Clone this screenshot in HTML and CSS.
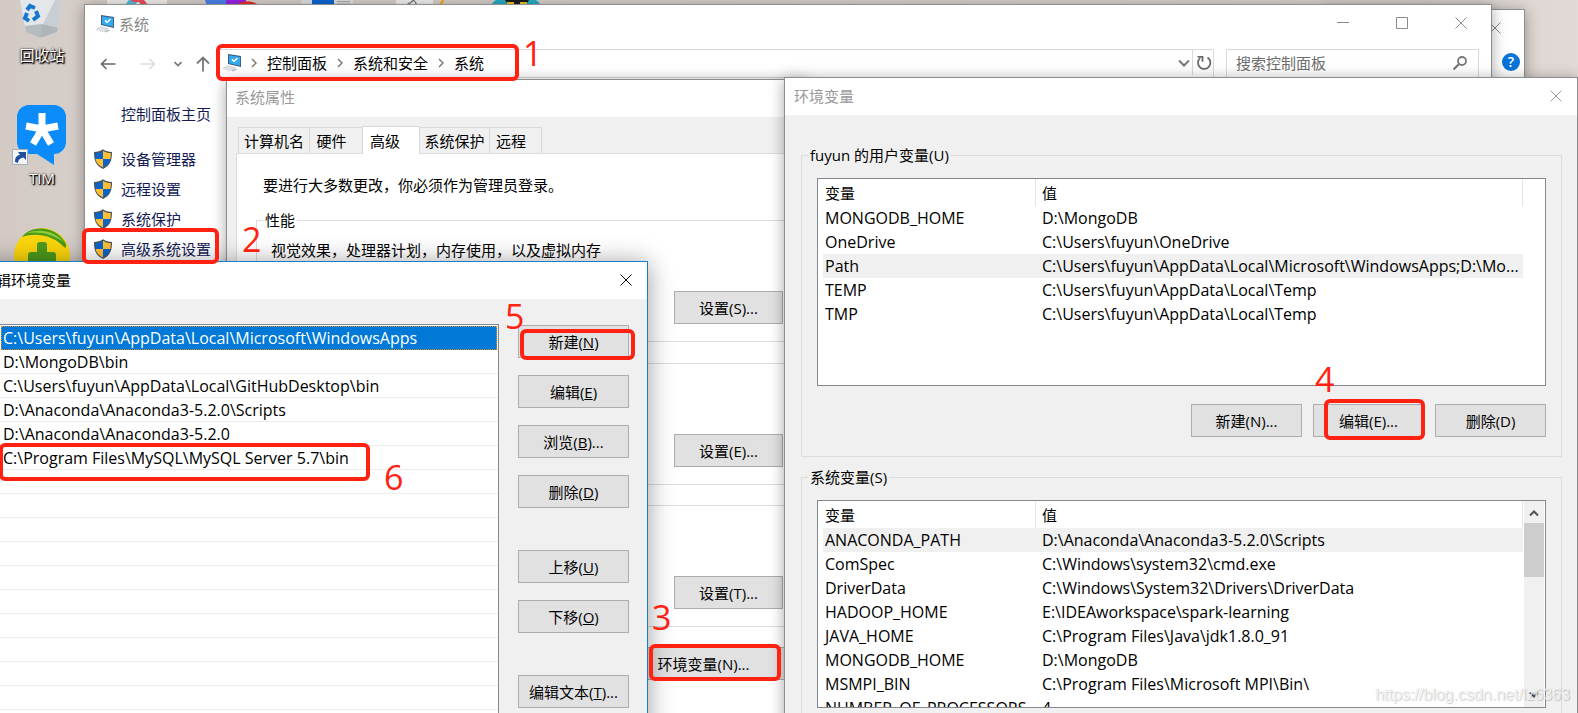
FILE: index.html
```html
<!DOCTYPE html>
<html lang="zh-CN">
<head>
<meta charset="utf-8">
<title>环境变量</title>
<link rel="stylesheet" href="styles.css">
</head>
<body>
<svg class="defs" width="0" height="0" aria-hidden="true">
  <symbol id="pc" viewBox="0 0 20 18">
    <path d="M6 0l13 2v11l-13-3z" fill="#3a5a78"/>
    <path d="M7 1.200l11.200 1.800v8.700l-11.200-2.500z" fill="#35aaf2"/>
    <path d="M10 5.300l2 2.200 3.500-3.500" fill="none" stroke="#fff" stroke-width="1.400"/>
    <path d="M0 14.500l6-3 8 2-6.500 3.500z" fill="#cfd4d9"/>
    <path d="M9 16.500l4-2 2.500.6-4 2.400z" fill="#b9c0c7"/>
    <path d="M3 14.500l6 1M5 13.300l5.500 1" stroke="#fff" stroke-width=".6"/>
  </symbol>
  <symbol id="shield" viewBox="0 0 18 20">
    <path d="M9 .2C6.500 2.200 3.300 2.900 0 2.900c0 8 1.500 13.400 9 17 7.500-3.600 9-9 9-17-3.300 0-6.500-.7-9-2.700z" fill="#4c5358"/>
    <path d="M9 1.700v8.300H1.600C1.300 8 1.200 6.200 1.200 4.100 4.200 4 7 3.200 9 1.700z" fill="#0c63c8"/>
    <path d="M9 1.700c2 1.500 4.800 2.300 7.800 2.400 0 2.100-.1 3.900-.4 5.900H9z" fill="#ffbf35"/>
    <path d="M1.600 10H9v8.500C4.300 16.200 2.200 13.600 1.600 10z" fill="#ffbf35"/>
    <path d="M16.400 10H9v8.500c4.700-2.300 6.800-4.900 7.400-8.500z" fill="#0c63c8"/>
  </symbol>
  <symbol id="close" viewBox="0 0 12 12"><path d="M.5.5l11 11M11.500.5l-11 11" fill="none" stroke="currentColor"/></symbol>
  <symbol id="right" viewBox="0 0 6 10"><path d="M1 1l4 4-4 4" fill="none" stroke="#7a7a7a" stroke-width="1.500"/></symbol>
</svg>

<main class="desktop">
  <svg class="strip" width="460" height="6" viewBox="0 0 460 6" aria-hidden="true">
    <path d="M7 0h60v6H7z" fill="#f1efee"/>
    <path d="M25 6c1-3 3-5 4-6h10l-5 6z" fill="#4cbfe0"/><path d="M30 0h14l5 6h-7l-3-4h-5z" fill="#f34b60"/>
    <path d="M105 0h24v6h-22z" fill="#4d83ec"/><path d="M126 0h20v6h-20z" fill="#9a22e6"/><path d="M136 6c3-6 19-6 23 0z" fill="#f02a2a"/>
    <path d="M201 0h52v6h-52z" fill="#dfe0e2"/><path d="M212 0h22v6h-22z" fill="#0a66d4"/><path d="M237 1.500h13M237 4h13" stroke="#aaa"/>
    <path d="M296 0h37v6h-37z" fill="#f1f1f1"/><path d="M307 5c1-3 4-1 4-3 3-3 5 0 5 2" fill="none" stroke="#333"/>
    <path d="M343 0l-3 6" stroke="#eeb10e" stroke-width="2.500"/>
    <path d="M391 6c1-3 3-5 5-6h40c3 2 4 4 5 6z" fill="#26afc6"/><path d="M405 0h24l-3 5h-18z" fill="#151b1d"/><path d="M407 3h7M420 3h7" stroke="#f0c628" stroke-width="2"/>
  </svg>

  <div class="shortcuts">
    <a class="shortcut" href="#">
      <svg width="46" height="38" viewBox="0 0 46 38" aria-hidden="true">
        <path d="M1 0h42l-5 32-17 6-14-6z" fill="#e4e7e9"/><path d="M43 0l-5 32-16 6 1-12L36 0z" fill="#c9ced2"/><path d="M6 26l17-2 16 4-1 4-17 6-14-6z" fill="#a6adb2" opacity=".75"/>
        <g fill="none" stroke="#1577cf" stroke-width="4"><path d="M8 10l3-4 5 2"/><path d="M17 11l2 5-5 4"/><path d="M10 21l-4-3 2-5"/></g>
      </svg>
      <span>回收站</span>
    </a>
    <a class="shortcut tim" href="#">
      <svg width="58" height="62" viewBox="0 0 58 62" aria-hidden="true">
        <path d="M17 0h25a12 12 0 0 1 12 12v25a12 12 0 0 1-12 12v11l-17-11h-8A12 12 0 0 1 5 37V12A12 12 0 0 1 17 0z" fill="#0c8cfb"/>
        <path d="M30 24V8M30 24l-16-3M30 24l16-3M30 24l-9 15M30 24l9 15" stroke="#fff" stroke-width="7"/>
        <path d="M.5 44.500h15v15H.5z" fill="#f3f5f7" stroke="#a8aeb4"/>
        <path d="M3 57c0-5 2-7 5-7l-2-3h8v8l-2.500-2.500C8 53 6 55 6 58z" fill="#20529b"/>
      </svg>
      <span>TIM</span>
    </a>
    <a class="shortcut guard" href="#" aria-label="360">
      <svg width="56" height="56" viewBox="0 0 56 56" aria-hidden="true">
        <circle cx="28" cy="28" r="28" fill="#fbd60b"/><path d="M8 9C16-3 42-4 52 16c0 2 0 3-1 4C42 9 24 3 8 9z" fill="#4c9a1c"/><path d="M13 5c12-5 28-2 37 9C38 6 26 3 13 5z" fill="#8ccf36"/>
        <path d="M23 17q0-3 3-3h4q3 0 3 3v7h6q3 0 3 3v7H14v-7q0-3 3-3h6z" fill="#4c9a1c"/>
      </svg>
    </a>
  </div>

  <section class="window back" aria-label="后台窗口">
    <svg class="glyph back-close" width="12" height="12"><use href="#close"/></svg>
    <button class="help" aria-label="帮助">?</button>
  </section>

  <section class="window system">
    <header class="system-title">
      <svg width="20" height="18" aria-hidden="true"><use href="#pc"/></svg>
      <h1>系统</h1>
      <div class="caption">
        <button aria-label="最小化"><svg width="12" height="12"><path d="M0 5.500h12" stroke="currentColor"/></svg></button>
        <button aria-label="最大化"><svg width="12" height="12"><path d="M.5.500h11v11H.5z" fill="none" stroke="currentColor"/></svg></button>
        <button aria-label="关闭"><svg width="12" height="12"><use href="#close"/></svg></button>
      </div>
    </header>
    <div class="toolbar">
      <nav class="arrows" aria-label="导航">
        <button aria-label="后退"><svg width="16" height="12"><path d="M15.500 6H1.500M6.500 1L1.500 6l5 5" fill="none" stroke="#666" stroke-width="1.600"/></svg></button>
        <button aria-label="前进"><svg width="16" height="12"><path d="M.5 6h14M9.500 1l5 5-5 5" fill="none" stroke="#ddd" stroke-width="1.600"/></svg></button>
        <button aria-label="最近"><svg width="8" height="6"><path d="M.5 1L4 4.500 7.500 1" fill="none" stroke="#777" stroke-width="1.600"/></svg></button>
        <button aria-label="上移一级"><svg width="14" height="16"><path d="M7 15.500v-14M1 7.500l6-6 6 6" fill="none" stroke="#777" stroke-width="1.800"/></svg></button>
      </nav>
      <div class="address">
        <svg width="20" height="18" aria-hidden="true"><use href="#pc"/></svg>
        <svg width="6" height="10"><use href="#right"/></svg>
        <a href="#">控制面板</a>
        <svg width="6" height="10"><use href="#right"/></svg>
        <a href="#">系统和安全</a>
        <svg width="6" height="10"><use href="#right"/></svg>
        <a href="#">系统</a>
        <button class="history" aria-label="历史记录"><svg width="12" height="8"><path d="M1 1.500l5 5 5-5" fill="none" stroke="#777" stroke-width="2"/></svg></button>
        <button class="refresh" aria-label="刷新"><svg width="16" height="16"><path d="M11.500 2.500A6.200 6.200 0 1 1 4 3.200" fill="none" stroke="#6a6a6a" stroke-width="1.800"/><path d="M1.500 1.800h5v5" fill="none" stroke="#6a6a6a" stroke-width="1.800"/></svg></button>
      </div>
      <label class="search">
        <input type="search" placeholder="搜索控制面板" aria-label="搜索控制面板">
        <svg width="14" height="14" aria-hidden="true"><circle cx="9" cy="5" r="4" fill="none" stroke="#777" stroke-width="1.800"/><path d="M6 8l-5.500 5.500" stroke="#777" stroke-width="2.200"/></svg>
      </label>
    </div>
    <nav class="side" aria-label="控制面板">
      <a class="home" href="#">控制面板主页</a>
      <a href="#"><svg width="18" height="20" aria-hidden="true"><use href="#shield"/></svg>设备管理器</a>
      <a href="#"><svg width="18" height="20" aria-hidden="true"><use href="#shield"/></svg>远程设置</a>
      <a href="#"><svg width="18" height="20" aria-hidden="true"><use href="#shield"/></svg>系统保护</a>
      <a href="#"><svg width="18" height="20" aria-hidden="true"><use href="#shield"/></svg>高级系统设置</a>
    </nav>
  </section>

  <section class="window dialog props">
    <header class="title"><h2>系统属性</h2></header>
    <div class="props-body">
      <div class="tabs" role="tablist">
        <button role="tab" class="tab">计算机名</button>
        <button role="tab" class="tab hardware">硬件</button>
        <button role="tab" class="tab active" aria-selected="true">高级</button>
        <button role="tab" class="tab protect">系统保护</button>
        <button role="tab" class="tab remote">远程</button>
      </div>
      <div class="panel" role="tabpanel">
        <p class="notice">要进行大多数更改，你必须作为管理员登录。</p>
        <fieldset class="setting named">
          <legend>性能</legend>
          <p>视觉效果，处理器计划，内存使用，以及虚拟内存</p>
          <button class="btn">设置(S)...</button>
        </fieldset>
        <fieldset class="setting"><button class="btn">设置(E)...</button></fieldset>
        <fieldset class="setting"><button class="btn">设置(T)...</button></fieldset>
        <button class="btn env-open">环境变量(N)...</button>
      </div>
    </div>
  </section>

  <section class="window dialog env">
    <header class="title"><h2>环境变量</h2><button class="x" aria-label="关闭"><svg width="12" height="12"><use href="#close"/></svg></button></header>
    <div class="env-body">
      <fieldset class="group">
        <legend>fuyun 的用户变量(U)</legend>
        <div class="list">
          <table>
            <thead><tr><th class="name">变量</th><th>值</th></tr></thead>
            <tbody>
              <tr><td>MONGODB_HOME</td><td>D:\MongoDB</td></tr>
              <tr><td>OneDrive</td><td>C:\Users\fuyun\OneDrive</td></tr>
              <tr class="picked"><td>Path</td><td>C:\Users\fuyun\AppData\Local\Microsoft\WindowsApps;D:\Mo...</td></tr>
              <tr><td>TEMP</td><td>C:\Users\fuyun\AppData\Local\Temp</td></tr>
              <tr><td>TMP</td><td>C:\Users\fuyun\AppData\Local\Temp</td></tr>
            </tbody>
          </table>
          <div class="gutter"></div>
        </div>
        <div class="actions">
          <button class="btn">新建(N)...</button>
          <button class="btn">编辑(E)...</button>
          <button class="btn">删除(D)</button>
        </div>
      </fieldset>
      <fieldset class="group">
        <legend>系统变量(S)</legend>
        <div class="list">
          <table>
            <thead><tr><th class="name">变量</th><th>值</th></tr></thead>
            <tbody>
              <tr class="picked"><td>ANACONDA_PATH</td><td>D:\Anaconda\Anaconda3-5.2.0\Scripts</td></tr>
              <tr><td>ComSpec</td><td>C:\Windows\system32\cmd.exe</td></tr>
              <tr><td>DriverData</td><td>C:\Windows\System32\Drivers\DriverData</td></tr>
              <tr><td>HADOOP_HOME</td><td>E:\IDEAworkspace\spark-learning</td></tr>
              <tr><td>JAVA_HOME</td><td>C:\Program Files\Java\jdk1.8.0_91</td></tr>
              <tr><td>MONGODB_HOME</td><td>D:\MongoDB</td></tr>
              <tr><td>MSMPI_BIN</td><td>C:\Program Files\Microsoft MPI\Bin\</td></tr>
              <tr><td>NUMBER_OF_PROCESSORS</td><td>4</td></tr>
            </tbody>
          </table>
          <div class="gutter bar">
            <svg width="10" height="6"><path d="M1 5.500l4-4 4 4" fill="none" stroke="#505050" stroke-width="2"/></svg>
            <div class="thumb"></div>
            <svg width="10" height="6"><path d="M1 .5l4 4 4-4" fill="none" stroke="#505050" stroke-width="2"/></svg>
          </div>
        </div>
      </fieldset>
    </div>
  </section>

  <section class="window dialog edit">
    <header class="title"><h2>编辑环境变量</h2><button class="x" aria-label="关闭"><svg width="12" height="12"><use href="#close"/></svg></button></header>
    <div class="edit-body">
      <ul class="paths">
        <li class="picked">C:\Users\fuyun\AppData\Local\Microsoft\WindowsApps</li>
        <li>D:\MongoDB\bin</li>
        <li>C:\Users\fuyun\AppData\Local\GitHubDesktop\bin</li>
        <li>D:\Anaconda\Anaconda3-5.2.0\Scripts</li>
        <li>D:\Anaconda\Anaconda3-5.2.0</li>
        <li>C:\Program Files\MySQL\MySQL Server 5.7\bin</li>
      </ul>
      <div class="commands">
        <div class="set">
          <button class="btn">新建(<u>N</u>)</button>
          <button class="btn">编辑(<u>E</u>)</button>
          <button class="btn">浏览(<u>B</u>)...</button>
          <button class="btn">删除(<u>D</u>)</button>
        </div>
        <div class="set">
          <button class="btn">上移(<u>U</u>)</button>
          <button class="btn">下移(<u>O</u>)</button>
        </div>
        <div class="set"><button class="btn">编辑文本(<u>T</u>)...</button></div>
      </div>
    </div>
  </section>

  <div class="mark m1"></div><b class="step s1">1</b>
  <div class="mark m2"></div><b class="step s2">2</b>
  <div class="mark m3"></div><b class="step s3">3</b>
  <div class="mark m4"></div><b class="step s4">4</b>
  <div class="mark m5"></div><b class="step s5">5</b>
  <div class="mark m6"></div><b class="step s6">6</b>
  <div class="watermark">https://blog.csdn.net/lz6363</div>
</main>
</body>
</html>
```
FILE: styles.css
```css
* { box-sizing: border-box; }
html, body { height: 100%; margin: 0; }
body, button, input { font: 15px/20px "Open Sans", "Noto Sans CJK SC", sans-serif; color: #000; }
h1, h2, p, ul { margin: 0; padding: 0; font-size: 15px; font-weight: 400; list-style: none; }
a { color: inherit; text-decoration: none; }
button { padding: 0; border: 0; background: none; white-space: nowrap; }
svg { display: block; flex: none; }
.defs { position: absolute; }

.desktop {
  position: relative;
  height: 100%;
  overflow: hidden;
  background: linear-gradient(90deg, #d3cac4, #d6cec9 80px, #d9d1cc 1400px, #e1dad6);
}
.strip { position: absolute; top: 0; left: 100px; }

.shortcuts { display: flex; flex-direction: column; align-items: center; width: 84px; }
.shortcut { display: flex; flex-direction: column; align-items: center; gap: 7px; color: #fff; text-shadow: 0 0 2px #000, 1px 1px 2px #000, 1px 1px 1px #000; }
.tim { margin-top: 40px; gap: 1px; }
.tim svg { margin-right: 2px; }
.guard { margin-top: 40px; }

.window { position: absolute; background: #fff; border: 1px solid #8e8e8e; box-shadow: 0 2px 14px rgba(0, 0, 0, .35); }
.back { top: 9px; right: 53px; bottom: 20px; width: 200px; }
.back-close { position: absolute; top: 12px; right: 23px; color: #8a8a8a; }
.help { position: absolute; top: 43px; right: 4px; width: 18px; height: 18px; border-radius: 50%; background: #0874d8; color: #fff; font-size: 14px; font-weight: 600; line-height: 18px; }

.system { top: 4px; left: 84px; right: 86px; bottom: 20px; }
.system-title { display: flex; align-items: center; gap: 4px; height: 38px; padding: 0 24px 0 10px; color: #888; }
.caption { display: flex; gap: 47px; margin: 0 0 2px auto; color: #8a8a8a; }
.caption button, .x { color: inherit; }
.toolbar { display: flex; height: 29px; margin-top: 6px; padding: 0 12px 0 15px; }
.arrows { display: flex; align-items: center; width: 117px; }
.arrows button { margin-right: 14px; }
.arrows button:first-child { margin-right: 24px; }
.arrows button:nth-child(2) { margin-right: 18px; }
.address { display: flex; flex: 1; align-items: center; gap: 10px; border: 1px solid #d9d9d9; padding: 0 0 2px 4px; }
.address svg:first-child { margin-right: -1px; }
.history { margin-left: auto; margin-right: -7px; }
.refresh { display: flex; align-items: center; justify-content: center; align-self: stretch; width: 21px; border-left: 1px solid #d9d9d9; }
.search { display: flex; align-items: center; width: 253px; margin-left: 12px; padding: 0 11px 2px 9px; border: 1px solid #d9d9d9; }
.search input { flex: 1; min-width: 0; padding: 0; border: 0; outline: 0; background: none; }
.search input::placeholder { color: #6d6d6d; opacity: 1; }
.side { display: flex; flex-direction: column; gap: 10px; width: 140px; padding: 26px 0 0 9px; color: #151c55; }
.side a { display: flex; align-items: center; gap: 9px; height: 20px; white-space: nowrap; }
.side .home { margin-bottom: 15px; padding-left: 27px; }

.dialog { background: #f0f0f0; }
.title { display: flex; align-items: center; justify-content: space-between; height: 37px; padding: 0 15px 2px 9px; background: #fff; color: #999; }

.btn { width: 111px; height: 33px; border: 1px solid #adadad; background: #e1e1e1; line-height: 30px; }

.props { top: 79px; left: 226px; width: 580px; bottom: -40px; display: flex; flex-direction: column; }
.props .title { padding: 0 0 4px 8px; }
.props-body { display: flex; flex: 1; flex-direction: column; padding: 8px 0 0 9px; }
.tabs { display: flex; align-items: flex-end; height: 28px; padding-left: 2px; }
.tab { position: relative; width: 72px; height: 26px; margin-right: -1px; padding-left: 0; border: 1px solid #d9d9d9; border-bottom: 0; background: #f0f0f0; line-height: 26px; }
.hardware { width: 54px; padding-right: 9px; }
.active { z-index: 1; width: 58px; height: 28px; margin-bottom: -1px; padding-right: 12px; background: #fff; line-height: 24px; }
.protect { width: 71px; }
.remote { width: 53px; padding-right: 9px; }
.panel { display: flex; flex: 1; flex-direction: column; padding: 21px 7px 0 19px; border: 1px solid #dcdcdc; background: #fff; }
.notice { margin: 0 0 15px 7px; }
.setting { display: flex; flex-direction: column; min-width: 0; margin: 0 0 20px; padding: 70px 13px 17px 6px; border: 1px solid #dcdcdc; }
.setting.named { margin-bottom: 21px; padding-top: 10px; }
.setting legend, .group legend { padding: 0 2px; }
.setting p { margin: 0 0 31px 8px; }
.setting .btn { align-self: flex-end; width: 109px; }
.env-open { align-self: flex-end; width: 163px; margin-right: 12px; }

.env { top: 77px; left: 784px; right: 0; bottom: -40px; }
.env-body { padding: 30px 15px 0 16px; }
.group { min-width: 0; margin: 0 0 10px; padding: 13px 15px 19px; border: 1px solid #dcdcdc; }
.group legend { margin-left: -9px; }
.list { display: flex; height: 208px; overflow: hidden; padding-left: 5px; border: 1px solid #828790; background: #fff; }
.list table { flex: 1; align-self: flex-start; border-collapse: separate; border-spacing: 0; table-layout: fixed; }
.list th { height: 27px; padding: 0 0 0 6px; border-right: 1px solid #e5e5e5; text-align: left; font-weight: 400; }
.list .name { width: 213px; padding-left: 2px; }
.list td { height: 24px; padding: 0 0 0 6px; overflow: hidden; font-size: 16px; line-height: 24px; white-space: nowrap; }
.list td:first-child { padding-left: 2px; }
.picked td { background: #f0f0f0; }
.gutter { flex: none; width: 22px; }
.bar { display: flex; flex-direction: column; align-items: center; width: 20px; margin: 0 1px; padding: 9px 0; background: #f0f0f0; }
.thumb { align-self: stretch; height: 54px; margin: 7px 0 auto; background: #cdcdcd; }
.actions { display: flex; justify-content: flex-end; gap: 11px; margin-top: 18px; }

.edit { top: 261px; left: -30px; width: 678px; bottom: -40px; display: flex; flex-direction: column; border-color: #1a7dcb; box-shadow: 0 2px 24px rgba(0, 0, 0, .4); }
.edit .title { padding-left: 10px; color: #000; }
.edit-body { display: flex; flex: 1; gap: 19px; padding: 25px 18px 0 28px; }
.paths { flex: 1; padding: 1px; border: 1px solid #828790; background: #fff repeating-linear-gradient(#fff 0 23px, #ececec 23px 24px) 0 1px; font-size: 16px; line-height: 24px; }
.paths li { height: 24px; padding-left: 2px; font-size: 16px; white-space: nowrap; }
.paths .picked { background: #0078d7; color: #fff; outline: 1px dotted #e08a30; outline-offset: -1px; }
.commands { display: flex; flex-direction: column; gap: 42px; padding-top: 1px; }
.set { display: flex; flex-direction: column; gap: 17px; }

.mark { position: absolute; border: 4px solid #ff2212; border-radius: 6px; }
.m1 { top: 44px; left: 216px; width: 303px; height: 37px; }
.m2 { top: 228px; left: 82px; width: 137px; height: 36px; }
.m3 { top: 644px; left: 649px; width: 132px; height: 37px; }
.m4 { top: 399px; left: 1324px; width: 101px; height: 41px; }
.m5 { top: 329px; left: 520px; width: 115px; height: 31px; }
.m6 { top: 443px; left: -1px; width: 371px; height: 38px; }
.step { position: absolute; color: #ff2212; font-size: 34px; font-weight: 400; line-height: 34px; }
.s1 { top: 36px; left: 523px; }
.s2 { top: 222px; left: 242px; }
.s3 { top: 600px; left: 652px; }
.s4 { top: 362px; left: 1315px; }
.s5 { top: 299px; left: 505px; }
.s6 { top: 460px; left: 384px; }
.watermark { position: absolute; right: 8px; bottom: 8px; color: rgba(255, 255, 255, .8); font-family: "Liberation Sans", sans-serif; font-size: 16px; text-shadow: 1px 1px 1px rgba(0, 0, 0, .18), 0 0 1px rgba(0, 0, 0, .15); }
```
